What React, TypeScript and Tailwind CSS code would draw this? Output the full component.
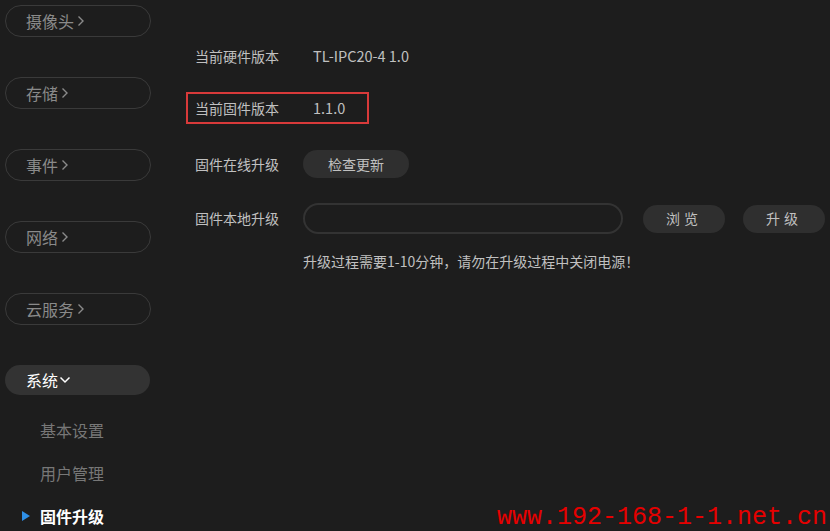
import React from 'react';

const navItems = ['摄像头', '存储', '事件', '网络', '云服务'];
const subItems = ['基本设置', '用户管理'];

const Chevron = () => (
  <svg width="8" height="12" viewBox="0 0 8 12" className="ml-[3px]">
    <path d="M1.5 1.5 L6 6 L1.5 10.5" fill="none" stroke="currentColor" strokeWidth="1.4" />
  </svg>
);

const ChevronDown = () => (
  <svg width="12" height="8" viewBox="0 0 12 8" className="ml-[1px]">
    <path d="M1.5 1.5 L6 6 L10.5 1.5" fill="none" stroke="currentColor" strokeWidth="1.5" />
  </svg>
);

const Sidebar = () => (
  <aside className="flex w-[155px] shrink-0 flex-col pt-[5px] pl-[5px]">
    {navItems.map((item) => (
      <div
        key={item}
        className="mb-[40px] flex h-[32px] w-[146px] items-center rounded-full border border-[#3a3a3a] pl-[20px] text-[16px] text-[#8a8a8a]"
      >
        {item}
        <Chevron />
      </div>
    ))}
    <div className="flex h-[30px] w-[145px] items-center rounded-full bg-[#333333] pl-[21px] text-[16px] text-white">
      系统
      <ChevronDown />
    </div>
    <ul className="mt-[23px] flex flex-col gap-[19px]">
      {subItems.map((s) => (
        <li key={s} className="h-[24px] pl-[35px] text-[16px] leading-[24px] text-[#777777]">
          {s}
        </li>
      ))}
      <li className="flex h-[24px] items-center text-[16px] font-bold leading-[24px] text-white">
        <span className="ml-[17px] mr-[10px] h-0 w-0 border-y-[5px] border-l-[8px] border-y-transparent border-l-[#2e8fe6]" />
        固件升级
      </li>
    </ul>
  </aside>
);

const Main = () => (
  <main className="flex flex-1 flex-col pt-[43px] pl-[31px] text-[14px] text-[#c0c0c0]">
    <div className="flex h-[26px] items-center px-[9px]">
      <span className="w-[118px]">当前硬件版本</span>
      <span className="text-[14.5px]">TL-IPC20-4 1.0</span>
    </div>
    <div className="mt-[23px] flex h-[32px] w-[183px] items-center border-2 border-[#d83a3a] px-[7px]">
      <span className="w-[118px]">当前固件版本</span>
      <span className="text-[14.5px]">1.1.0</span>
    </div>
    <div className="mt-[26px] flex h-[28px] items-center px-[9px]">
      <span className="w-[108px]">固件在线升级</span>
      <button className="h-[28px] w-[106px] rounded-full bg-[#2f2f2f] text-[14px] text-[#c0c0c0]">
        检查更新
      </button>
    </div>
    <div className="mt-[25px] flex h-[31px] items-center px-[9px]">
      <span className="w-[108px]">固件本地升级</span>
      <div className="h-[31px] w-[320px] rounded-full border-2 border-[#333333]" />
      <button className="ml-[20px] h-[28px] w-[82px] rounded-full bg-[#2f2f2f] text-[14px] tracking-[4px] text-[#c0c0c0]">
        浏览
      </button>
      <button className="ml-[18px] h-[28px] w-[82px] rounded-full bg-[#2f2f2f] text-[14px] tracking-[4px] text-[#c0c0c0]">
        升级
      </button>
    </div>
    <p className="mt-[17px] pl-[117px] text-[14px] leading-[20px]">
      升级过程需要1-10分钟，请勿在升级过程中关闭电源！
    </p>
  </main>
);

export default function App() {
  return (
    <div
      className="relative flex h-[531px] w-[830px] overflow-hidden bg-[#1d1d1d]"
      style={{ fontFamily: '"Noto Sans CJK SC", "Noto Sans", sans-serif' }}
    >
      <Sidebar />
      <Main />
      <div
        className="absolute right-[3px] bottom-[-2px] text-[25px] leading-[30px] text-[#e60000]"
        style={{ fontFamily: '"Liberation Mono", monospace' }}
      >
        www.192-168-1-1.net.cn
      </div>
    </div>
  );
}
